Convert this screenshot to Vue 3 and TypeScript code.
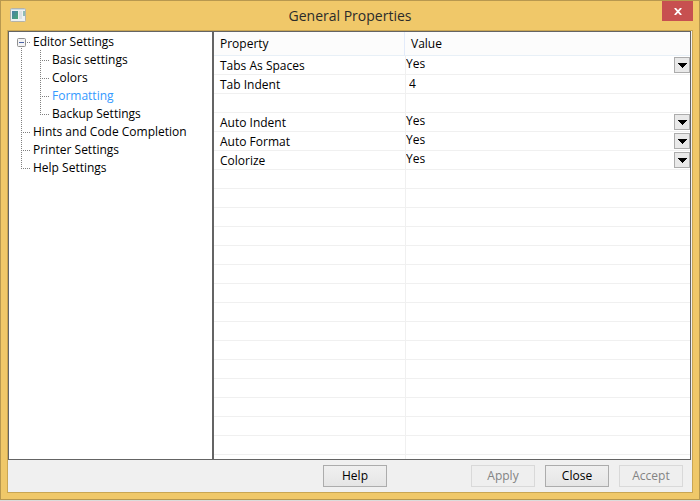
<script setup lang="ts">
import { ref, reactive } from 'vue'

type Guide = 'box' | 'line' | 'tee' | 'corner'
interface TreeNode { label: string; guides: Guide[] }
interface Property { label: string; kind: 'choice' | 'text' | 'blank'; value: string }

const nodes: TreeNode[] = [
  { label: 'Editor Settings', guides: ['box'] },
  { label: 'Basic settings', guides: ['line', 'tee'] },
  { label: 'Colors', guides: ['line', 'tee'] },
  { label: 'Formatting', guides: ['line', 'tee'] },
  { label: 'Backup Settings', guides: ['line', 'corner'] },
  { label: 'Hints and Code Completion', guides: ['tee'] },
  { label: 'Printer Settings', guides: ['tee'] },
  { label: 'Help Settings', guides: ['corner'] },
]
const selected = ref('Formatting')

const properties = reactive<Property[]>([
  { label: 'Tabs As Spaces', kind: 'choice', value: 'Yes' },
  { label: 'Tab Indent', kind: 'text', value: '4' },
  { label: '', kind: 'blank', value: '' },
  { label: 'Auto Indent', kind: 'choice', value: 'Yes' },
  { label: 'Auto Format', kind: 'choice', value: 'Yes' },
  { label: 'Colorize', kind: 'choice', value: 'Yes' },
])
</script>

<template>
  <div class="window">
    <header class="titlebar">
      <svg class="app-icon" width="16" height="14" viewBox="0 0 16 14" aria-hidden="true">
        <defs>
          <linearGradient id="icon-fill" x1="0" y1="0" x2="1" y2="1">
            <stop offset="0" stop-color="#4a7fa8" />
            <stop offset="1" stop-color="#48a873" />
          </linearGradient>
        </defs>
        <rect x=".5" y=".5" width="15" height="13" rx="1" fill="#eef1f2" stroke="#b3b3aa" />
        <rect x="1" y="1" width="14" height="1" fill="#c9dbe8" />
        <rect x="2" y="3" width="6" height="8" fill="url(#icon-fill)" />
        <rect x="9" y="3" width="3" height="8" fill="#dbe1e4" />
        <rect x="13" y="3" width="2" height="5" fill="#8fbcb6" />
      </svg>
      <h1>General Properties</h1>
      <button class="close" type="button" aria-label="Close window">
        <svg width="8" height="7" viewBox="0 0 8 7" aria-hidden="true">
          <path d="M.8 0 7.2 7M7.2 0 .8 7" stroke="#fff" stroke-width="1.8" />
        </svg>
      </button>
    </header>
    <main class="client">
      <div class="panes">
        <ul class="tree">
          <li v-for="node in nodes" :key="node.label">
            <svg v-for="(guide, i) in node.guides" :key="i" class="guide" width="19" height="18" viewBox="0 0 19 18" aria-hidden="true">
              <template v-if="guide === 'box'">
                <path class="dots" d="M16 10.5H19M10.5 16V18" />
                <rect x="6.5" y="6.5" width="8" height="8" rx="1" fill="#f4f4f4" stroke="#919191" />
                <path d="M8 10.5H13" stroke="#4b63a7" />
              </template>
              <path v-else-if="guide === 'line'" class="dots" d="M10.5 0V18" />
              <path v-else-if="guide === 'tee'" class="dots" d="M10.5 0V18M12 10.5H19" />
              <path v-else class="dots" d="M10.5 0V11M12 10.5H19" />
            </svg>
            <button type="button" :class="{ selected: node.label === selected }" @click="selected = node.label">{{ node.label }}</button>
          </li>
        </ul>
        <section class="sheet">
          <table>
            <colgroup><col class="name-col" /><col /></colgroup>
            <thead>
              <tr><th scope="col">Property</th><th scope="col">Value</th></tr>
            </thead>
            <tbody>
              <tr v-for="(item, i) in properties" :key="i">
                <td><label v-if="item.label" :for="`property-${i}`">{{ item.label }}</label></td>
                <td>
                  <div v-if="item.kind === 'choice'" class="choice">
                    <select :id="`property-${i}`" v-model="item.value"><option>Yes</option><option>No</option></select>
                    <svg class="drop" width="16" height="16" viewBox="0 0 16 16" shape-rendering="crispEdges" aria-hidden="true">
                      <rect x=".5" y=".5" width="15" height="15" fill="#e9e9e9" stroke="#acacac" />
                      <path d="M4 6h9v1h-1v1h-1v1h-1v1H9v1H8v-1H7V9H6V8H5V7H4z" />
                    </svg>
                  </div>
                  <input v-else-if="item.kind === 'text'" :id="`property-${i}`" v-model="item.value" type="text" />
                </td>
              </tr>
            </tbody>
          </table>
          <div class="empty-rows"></div>
        </section>
      </div>
      <footer class="actions">
        <button type="button" class="help">Help</button>
        <button type="button" disabled>Apply</button>
        <button type="button">Close</button>
        <button type="button" disabled>Accept</button>
      </footer>
    </main>
  </div>
</template>

<style>
body { background: #dcdcdc; }
</style>

<style scoped>
* { box-sizing: border-box; }
.window {
  display: flex;
  flex-direction: column;
  height: calc(100vh - 1px);
  padding: 0 6px 6px;
  border: 1px solid #b8984f;
  background: #f0c869;
  font: 12px/18px "Open Sans", "Noto Sans", sans-serif;
  color: #000;
}
button, input, select { font: inherit; color: inherit; margin: 0; }
.titlebar {
  display: grid;
  grid-template-columns: 40px 1fr 40px;
  height: 29px;
  flex: none;
}
.app-icon { margin: 7px 0 0 3px; }
h1 {
  margin: 0;
  font-size: 14px;
  font-weight: 400;
  line-height: 30px;
  text-align: center;
  color: #2b2b2b;
}
.close {
  display: flex;
  align-items: center;
  justify-content: center;
  justify-self: end;
  width: 31px;
  height: 20px;
  padding: 0;
  border: 0;
  background: #c75050;
}
.client {
  display: flex;
  flex: 1;
  flex-direction: column;
  min-height: 0;
  border: 1px solid #c9a654;
  background: #f0f0f0;
}
.panes {
  display: flex;
  flex: 1;
  min-height: 0;
  margin-right: 1px;
  border: 1px solid #646464;
  background: #fff;
}
.tree {
  flex: none;
  width: 203px;
  margin: 0;
  padding: 0 2px;
  list-style: none;
}
.tree li { display: flex; height: 18px; }
.guide { flex: none; }
.dots {
  fill: none;
  stroke: #808080;
  stroke-dasharray: 1 1;
  shape-rendering: crispEdges;
}
.tree button {
  height: 20px;
  padding: 0 3px;
  border: 0;
  background: none;
  line-height: 20px;
  white-space: nowrap;
}
.tree .selected { color: #3399ff; }
.sheet {
  display: flex;
  flex: 1;
  flex-direction: column;
  min-width: 0;
  overflow: hidden;
  border-left: 2px solid #646464;
}
table {
  width: 100%;
  table-layout: fixed;
  border-spacing: 0;
}
.name-col { width: 191px; }
th, td { padding: 0; border-bottom: 1px solid #f0f0f0; text-align: left; }
th {
  height: 24px;
  padding: 0 6px;
  border-bottom-color: #e8f0f7;
  background: #fcfcfc;
  font-weight: 400;
}
th:first-child { border-right: 1px solid #e3ebfa; }
td { height: 19px; line-height: 18px; }
td:first-child { padding-left: 6px; }
td + td { border-left: 1px solid #f0f0f0; }
td label { display: block; height: 18px; line-height: 20px; }
.choice { display: grid; grid-template-columns: 1fr 16px; height: 18px; }
.choice select {
  grid-area: 1 / 1 / 2 / 3;
  height: 16px;
  padding: 0;
  border: 0;
  appearance: none;
  background: none;
  line-height: 16px;
}
.drop { grid-area: 1 / 2; align-self: center; pointer-events: none; }
input {
  display: block;
  width: 100%;
  height: 16px;
  padding: 0 3px;
  border: 0;
  background: none;
}
.empty-rows {
  flex: 1;
  background:
    linear-gradient(#f0f0f0, #f0f0f0) 191px 0 / 1px 100% no-repeat,
    repeating-linear-gradient(#fff 0 18px, #f0f0f0 18px 19px);
}
.actions {
  display: flex;
  flex: none;
  gap: 10px;
  height: 32px;
  padding: 5px 9px;
  justify-content: flex-end;
}
.actions button {
  width: 64px;
  height: 22px;
  padding: 0;
  border: 1px solid #acacac;
  background: linear-gradient(#f0f0f0, #e5e5e5);
  line-height: 20px;
}
.actions button:disabled {
  border-color: #d9d9d9;
  background: #efefef;
  color: #838383;
}
.actions .help { margin-right: 74px; }
</style>
